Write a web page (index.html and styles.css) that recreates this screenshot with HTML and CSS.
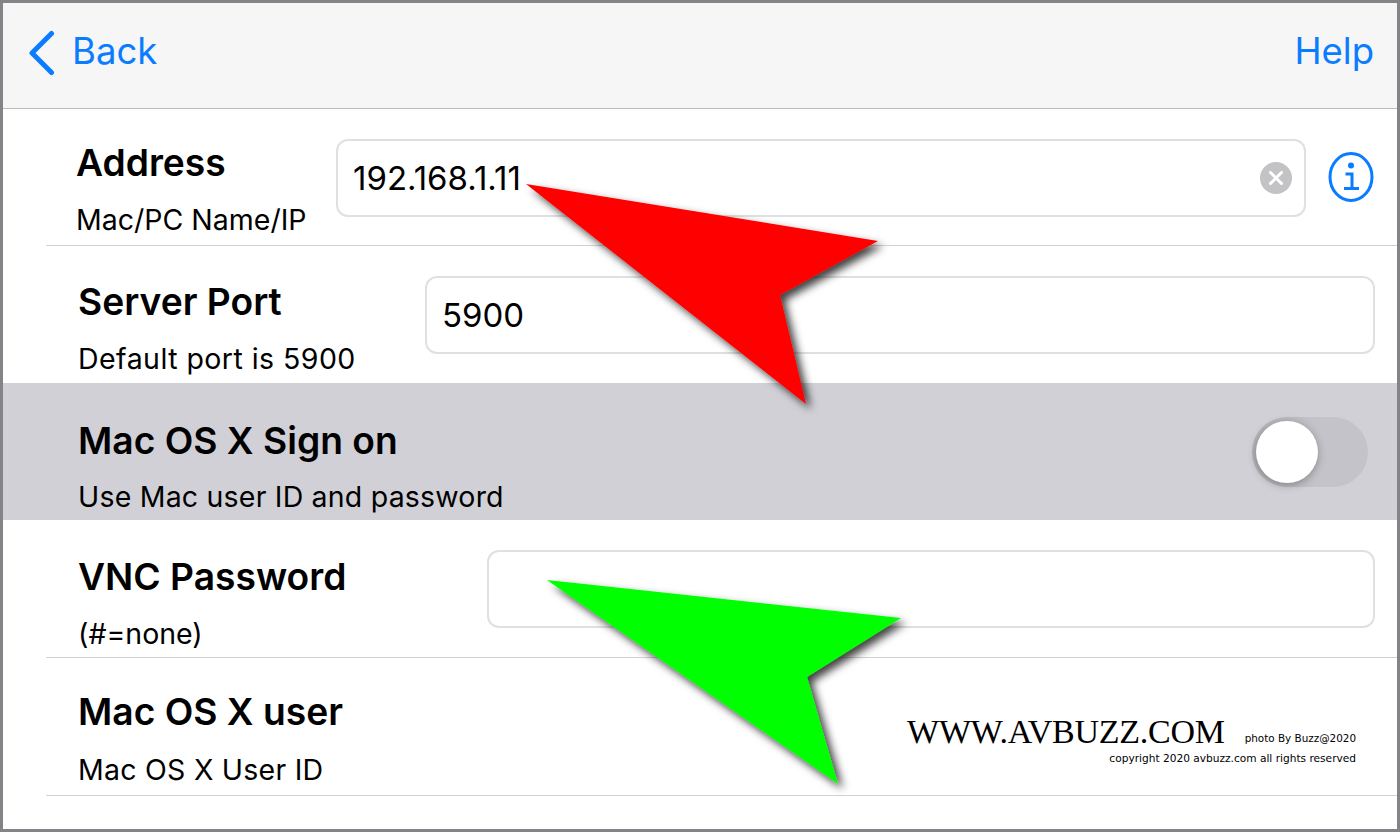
FILE: index.html
```html
<!DOCTYPE html>
<html lang="en">
<head>
<meta charset="utf-8">
<title>VNC connection settings</title>
<link rel="stylesheet" href="styles.css">
</head>
<body>
<div class="frame">
  <header class="nav">
    <a class="nav-back">
      <svg class="chevron" width="28" height="46" viewBox="0 0 28 46"><path d="M24.500 3.500 5 23l19.500 19.500" fill="none" stroke="#0a7cff" stroke-width="5" stroke-linecap="round" stroke-linejoin="round"/></svg>
      <span>Back</span>
    </a>
    <a class="nav-help">Help</a>
  </header>
  <main class="form">
    <section class="row row-address">
      <div class="label label-address"><h2 class="title">Address</h2><p class="sub">Mac/PC Name/IP</p></div>
      <div class="field"><span class="value">192.168.1.11</span>
        <svg class="clear" width="32" height="32" viewBox="0 0 32 32"><circle cx="16" cy="16" r="16" fill="#c3c3c5"/><path d="M10.500 10.500l11 11M21.500 10.500l-11 11" stroke="#fff" stroke-width="3" stroke-linecap="round"/></svg>
      </div>
      <svg class="info" width="46" height="50" viewBox="0 0 46 50"><ellipse cx="23" cy="25" rx="21" ry="23.500" fill="none" stroke="#0a7cff" stroke-width="3"/><circle cx="23" cy="13.500" r="3" fill="#0a7cff"/><path d="M17.500 22H24v14M16 36.500h15" fill="none" stroke="#0a7cff" stroke-width="3"/></svg>
    </section>
    <section class="row row-port">
      <div class="label label-port"><h2 class="title">Server Port</h2><p class="sub">Default port is 5900</p></div>
      <div class="field"><span class="value">5900</span></div>
    </section>
    <section class="row row-toggle">
      <div class="label"><h2 class="title">Mac OS X Sign on</h2><p class="sub">Use Mac user ID and password</p></div>
      <div class="switch"><span class="knob"></span></div>
    </section>
    <section class="row row-password">
      <div class="label label-password"><h2 class="title">VNC Password</h2><p class="sub">(#=none)</p></div>
      <div class="field"></div>
    </section>
    <section class="row row-user">
      <div class="label"><h2 class="title">Mac OS X user</h2><p class="sub">Mac OS X User ID</p></div>
    </section>
  </main>
  <svg class="arrows" width="1400" height="832" viewBox="0 0 1400 832">
    <defs><filter id="shadow" x="-15%" y="-15%" width="130%" height="130%"><feDropShadow dx="5" dy="5" stdDeviation="4" flood-color="#000" flood-opacity=".75"/></filter></defs>
    <polygon points="526,184 878,241 780,295 806,404" fill="#ff0000" filter="url(#shadow)"/>
    <polygon points="547,580 901,618 807,677 838,784" fill="#00ff00" filter="url(#shadow)"/>
  </svg>
  <div class="credit">
    <div class="credit-top"><span class="site">WWW.AVBUZZ.COM</span><span class="photo">photo By Buzz@2020</span></div>
    <div class="copyright">copyright 2020 avbuzz.com all rights reserved</div>
  </div>
</div>
</body>
</html>
```
FILE: styles.css
```css
* { box-sizing: border-box; }
html, body { margin: 0; height: 100%; }
body { font-family: Inter, "Liberation Sans", sans-serif; color: #000; background: #fff; overflow: hidden; }
.frame { position: relative; width: 1400px; height: 832px; border: 3px solid #838388; background: #fff; overflow: hidden; }
.nav { height: 106px; background: #f6f6f6; border-bottom: 1px solid #bcbcbc; display: flex; align-items: center; justify-content: space-between; padding: 0 23px 10px 24px; color: #0a7cff; font-size: 36.500px; }
.nav-back { display: flex; align-items: center; gap: 17px; }
.chevron { margin-top: 4px; }
.nav-help { display: block; }
.form { display: flex; flex-direction: column; }
.row { height: 137px; margin-left: 43px; padding: 0 22px 0 32px; border-bottom: 1px solid #d2d2d4; display: flex; align-items: flex-start; }
.row-address { padding-left: 30px; padding-right: 24px; }
.row-port { border-bottom: 0; }
.row-toggle { margin-left: 0; padding-left: 75px; padding-right: 29px; background: #d1d0d6; border-bottom: 0; justify-content: space-between; }
.row-password, .row-user { height: 138px; }
.label { flex: none; padding-top: 31px; }
.row-address .label { padding-top: 29px; }
.row-toggle .label { padding-top: 33px; }
.row-password .label { padding-top: 32px; }
.row-user .label { padding-top: 29px; }
.label-address { width: 260px; }
.label-port { width: 347px; }
.label-password { width: 409px; }
.title { margin: 0; font-size: 37.200px; line-height: 50px; font-weight: 600; white-space: nowrap; }
.sub { margin: 15px 0 0; font-size: 28.500px; line-height: 34px; font-weight: 400; white-space: nowrap; }
.row-port .sub { letter-spacing: .45px; }
.row-toggle .sub { letter-spacing: .2px; margin-top: 14px; }
.row-password .sub { margin-top: 15px; }
.row-user .sub { letter-spacing: .25px; margin-top: 16px; }
.field { flex: 1; height: 78px; margin-top: 30px; border: 2px solid #e0e0e2; border-radius: 12px; background: #fff; display: flex; align-items: center; justify-content: space-between; padding: 0 12px 0 15px; font-size: 33px; }
.row-address .field { margin-right: 22px; flex: none; width: 970px; }
.row-password .field { margin-top: 30px; }
.clear { flex: none; }
.info { flex: none; margin-top: 43px; }
.switch { width: 116px; height: 70px; margin-top: 34px; border-radius: 35px; background: linear-gradient(90deg, #b4b3b9, #c4c3c9 55%); padding: 4px; }
.knob { display: block; width: 62px; height: 62px; border-radius: 50%; background: #fff; box-shadow: 0 2px 8px rgba(0,0,0,.3); }
.arrows { position: absolute; left: -3px; top: -3px; pointer-events: none; }
.credit { position: absolute; right: 41px; top: 711px; text-align: right; }
.credit-top { display: flex; align-items: flex-end; justify-content: flex-end; gap: 20px; }
.site { font-family: "Liberation Serif", serif; font-size: 34px; line-height: 36px; letter-spacing: -.25px; }
.photo, .copyright { font-family: "DejaVu Sans", sans-serif; font-size: 10.600px; line-height: 14px; }
.photo { font-size: 10.400px; margin-bottom: 5px; }
.copyright { margin-top: 1px; }
```
